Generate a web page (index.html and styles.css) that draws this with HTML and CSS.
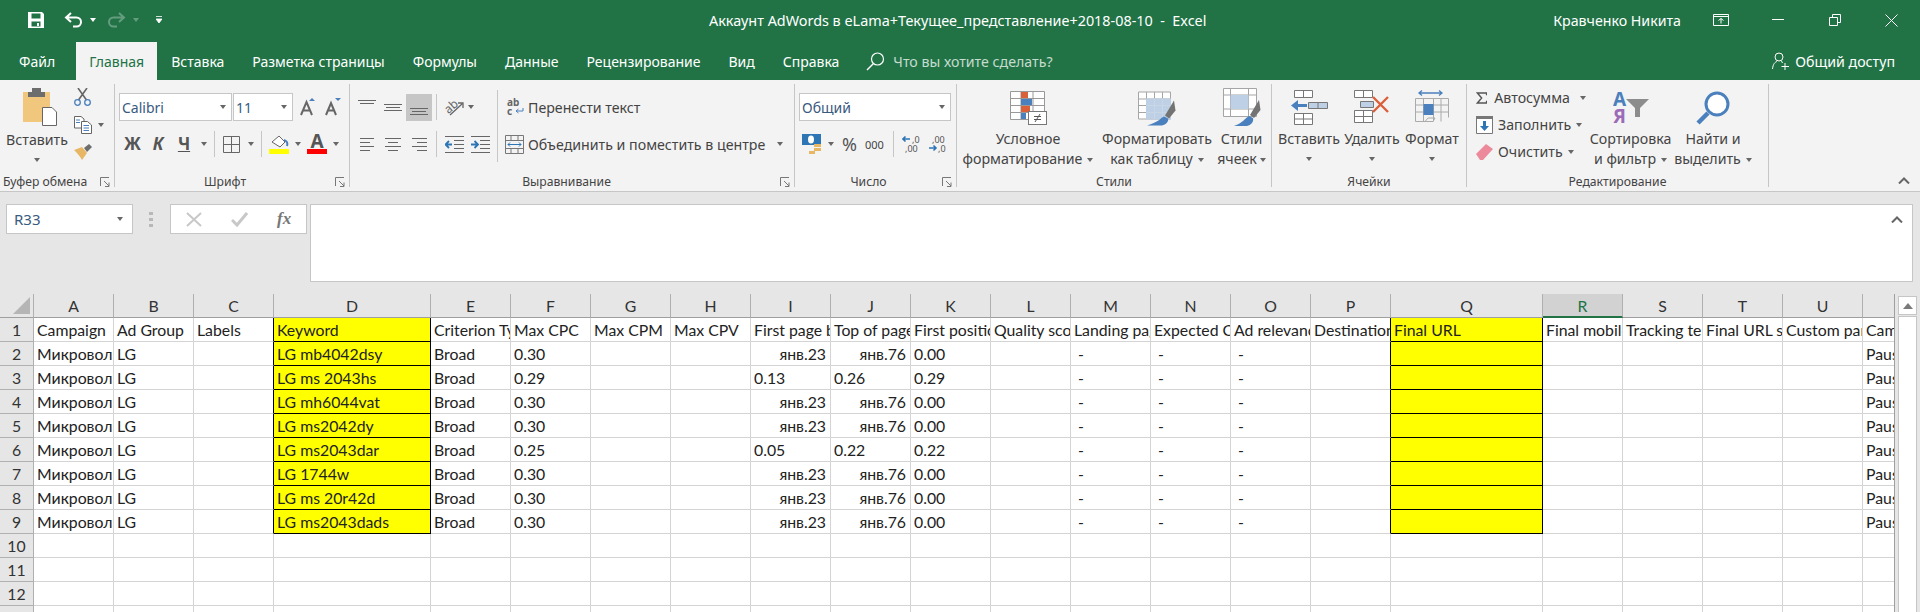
FILE: index.html
```html
<!DOCTYPE html>
<html lang="ru">
<head>
  <meta charset="UTF-8">
  <title>Аккаунт AdWords в eLama+Текущее_представление+2018-08-10 - Excel</title>
  <link rel="stylesheet" href="styles.css">
</head>
<body>
  <div class="title-bar">
    <svg class="qat-save" width="16" height="16" viewBox="0 0 16 16"><path fill="#fff" fill-rule="evenodd" d="M0 0H14L16 2V16H0ZM3.500 1.500V6.500H12.500V1.500ZM3.500 9.500V14.500H12.500V9.500Z"/><rect x="9" y="11" width="2" height="3" fill="#fff"/></svg>
    <svg class="qat-undo" width="19" height="16" viewBox="0 0 19 16"><path d="M7 1L2 5.500L7 10M2 5.500H12.500A4.500 4.500 0 0 1 12.500 14.500H9" fill="none" stroke="#fff" stroke-width="2"/></svg>
    <span class="caret white ml7"></span>
    <svg class="qat-redo" width="19" height="16" viewBox="0 0 19 16"><path d="M12 1L17 5.500L12 10M17 5.500H6.500A4.500 4.500 0 0 0 6.500 14.500H10" fill="none" stroke="#fff" stroke-width="2"/></svg>
    <span class="caret white faded ml7"></span>
    <svg class="qat-more" width="6" height="8" viewBox="0 0 6 8"><path d="M0 .5H6M0 3H6L3 7Z" fill="#fff" stroke="#fff" stroke-width=".8"/></svg>
    <div class="doc-title">Аккаунт AdWords в eLama+Текущее_представление+2018-08-10&nbsp; -&nbsp; Excel</div>
    <div class="user-name">Кравченко Никита</div>
    <svg class="win-display" width="16" height="12" viewBox="0 0 16 12"><path d="M.5 .5H15.500V11.500H.5ZM.5 2.500H15.500M8 9.500V4.500M5.500 6.500L8 4.500L10.500 6.500" fill="none" stroke="#fff"/></svg>
    <svg class="win-min" width="12" height="12" viewBox="0 0 12 12"><path d="M0 5.500H12" stroke="#fff"/></svg>
    <svg class="win-max" width="12" height="12" viewBox="0 0 12 12"><path d="M.5 3.500H8.500V11.500H.5ZM3.500 3.500V.5H11.500V8.500H8.500" fill="none" stroke="#fff"/></svg>
    <svg class="win-close" width="13" height="13" viewBox="0 0 13 13"><path d="M.5 .5L12.500 12.500M12.500 .5L.5 12.500" stroke="#fff"/></svg>
  </div>

  <div class="tab-bar">
    <div class="tab tab-file">Файл</div>
    <div class="tab active">Главная</div>
    <div class="tab">Вставка</div>
    <div class="tab">Разметка страницы</div>
    <div class="tab">Формулы</div>
    <div class="tab">Данные</div>
    <div class="tab">Рецензирование</div>
    <div class="tab">Вид</div>
    <div class="tab">Справка</div>
    <svg class="tell-icon" width="19" height="19" viewBox="0 0 19 19"><circle cx="11.500" cy="7" r="6" fill="none" stroke="#fff" stroke-width="1.200"/><path d="M7.500 11.500L1 18" stroke="#fff" stroke-width="1.400"/></svg>
    <div class="tell-me">Что вы хотите сделать?</div>
    <svg class="share-icon" width="17" height="18" viewBox="0 0 17 18"><circle cx="7" cy="5" r="4" fill="none" stroke="#fff"/><path d="M.5 17C1 12 3 10 5 9.500M9 9.500L11 10.500M13 11V18M9.500 14.500H17" fill="none" stroke="#fff"/></svg>
    <div class="share">Общий доступ</div>
  </div>

  <div class="ribbon">
    <!-- Буфер обмена -->
    <section class="group g-clip">
      <div class="group-body clip-body">
        <div class="big-btn paste-btn">
          <svg class="icon-box" width="34" height="38" viewBox="0 0 34 38"><rect y="4" width="27" height="30" fill="#f0c77d"/><path d="M5 9V4H9V0H18V4H22V9Z" fill="#6d6d6d"/><path d="M19.500 19.500H29L33.500 24V37.500H19.500Z" fill="#fff" stroke="#666"/></svg>
          <div class="line">Вставить</div>
          <span class="caret line-caret"></span>
        </div>
        <div class="clip-tools">
          <svg width="17" height="18" viewBox="0 0 17 18"><path d="M4.500 12L13 0M12.500 12L4 0" stroke="#666" stroke-width="1.600"/><circle cx="3.500" cy="14.500" r="2.800" fill="none" stroke="#4a80bd" stroke-width="1.300"/><circle cx="13.500" cy="14.500" r="2.800" fill="none" stroke="#4a80bd" stroke-width="1.300"/></svg>
          <div class="row-center">
            <svg width="18" height="18" viewBox="0 0 18 18"><path d="M.5 .5H7L10 3V12H.5Z" fill="#fff" stroke="#666"/><path d="M7.500 5.500H13.500L17.500 9V17.500H7.500Z" fill="#fff" stroke="#666"/><path d="M9.500 9.500H15M9.500 12H15M9.500 14.500H15M2 4H6M2 6.500H6" stroke="#4a80bd"/></svg>
            <span class="caret ml6"></span>
          </div>
          <svg width="18" height="16" viewBox="0 0 18 16"><path d="M0 6L8 3L13 9L8 16C6 12 3 9 0 6Z" fill="#e8b765"/><path d="M10 4L15 0L18 3L13 8Z" fill="#6d6d6d"/></svg>
        </div>
      </div>
      <div class="group-label"><span class="label-text label-clip">Буфер обмена</span><svg class="launcher" width="10" height="10" viewBox="0 0 10 10"><path d="M.5 9V.5H9M4 4L9 9M9 5.500V9.500H5" fill="none" stroke="#777"/></svg></div>
    </section>

    <!-- Шрифт -->
    <section class="group g-font">
      <div class="group-body">
        <div class="tool-row">
          <div class="select sel-font">Calibri<span class="caret"></span></div>
          <div class="select sel-size">11<span class="caret"></span></div>
          <svg class="ml7" width="16" height="18" viewBox="0 0 16 18"><path d="M1 17L6.500 4L12 17M3 12.500H10" fill="none" stroke="#666" stroke-width="2"/><path d="M9 3L12 0L15 3Z" fill="#4a80bd"/></svg>
          <svg class="ml9" width="16" height="18" viewBox="0 0 16 18"><path d="M1 17L6 5L11 17M3 12.500H9" fill="none" stroke="#666" stroke-width="2"/><path d="M10 0H16L13 3Z" fill="#4a80bd"/></svg>
        </div>
        <div class="tool-row row-two pl9">
          <b class="glyph glyph-b">Ж</b>
          <i class="glyph glyph-i">К</i>
          <span class="glyph glyph-u">Ч</span>
          <span class="caret ml9"></span>
          <span class="vsep ml7"></span>
          <svg class="ml8" width="17" height="17" viewBox="0 0 17 17"><path d="M.5 .5H16.500V16.500H.5ZM8.500 .5V16.500M.5 8.500H16.500" fill="none" stroke="#666"/></svg>
          <span class="caret ml8"></span>
          <span class="vsep ml7"></span>
          <svg class="ml7" width="20" height="20" viewBox="0 0 20 20"><path d="M3 8L10 2L16 8L11 13Z" fill="#fff" stroke="#666"/><path d="M15 6C18 7 19 9 18 12" fill="none" stroke="#4a80bd" stroke-width="2"/><rect y="15" width="20" height="5" fill="#ff0"/></svg>
          <span class="caret ml6"></span>
          <div class="font-color ml6"><span class="font-color-a">A</span><span class="font-color-bar"></span></div>
          <span class="caret ml6"></span>
        </div>
      </div>
      <div class="group-label"><span class="label-text">Шрифт</span><svg class="launcher" width="10" height="10" viewBox="0 0 10 10"><path d="M.5 9V.5H9M4 4L9 9M9 5.500V9.500H5" fill="none" stroke="#777"/></svg></div>
    </section>

    <!-- Выравнивание -->
    <section class="group g-align">
      <div class="group-body align-body">
        <div class="align-left">
          <div class="tool-row pl8">
            <svg width="18" height="20" viewBox="0 0 18 20"><path d="M0 3.500H18M2 6.500H16" stroke="#666"/></svg>
            <svg class="ml8" width="18" height="20" viewBox="0 0 18 20"><path d="M0 7.500H18M2 10.500H16M0 13.500H18" stroke="#666"/></svg>
            <div class="align-on ml4"><svg width="18" height="20" viewBox="0 0 18 20"><path d="M0 11.500H18M2 14.500H16M0 17.500H18" stroke="#666"/></svg></div>
            <span class="vsep ml4"></span>
            <svg class="ml8" width="19" height="19" viewBox="0 0 19 19"><text x="0" y="13" class="svg-ab" transform="rotate(-42 6 10)">ab</text><path d="M5 17L17 6M13 5H18V10" fill="none" stroke="#666" stroke-width="1.300"/></svg>
            <span class="caret ml4"></span>
          </div>
          <div class="tool-row row-two row-two-align pl10">
            <svg width="14" height="13" viewBox="0 0 14 13"><path d="M0 .5H14M0 4.500H10M0 8.500H14M0 12.500H10" stroke="#666"/></svg>
            <svg class="ml11" width="16" height="13" viewBox="0 0 16 13"><path d="M0 .5H16M3 4.500H13M0 8.500H16M3 12.500H13" stroke="#666"/></svg>
            <svg class="ml11" width="15" height="13" viewBox="0 0 15 13"><path d="M0 .5H15M5 4.500H15M0 8.500H15M5 12.500H15" stroke="#666"/></svg>
            <span class="vsep ml9"></span>
            <svg class="ml8" width="19" height="17" viewBox="0 0 19 17"><path d="M0 .5H19M9 4.500H19M9 8.500H19M9 12.500H19M0 16.500H19" stroke="#666"/><path d="M7 8.500H1M4 5L.5 8.500L4 12" fill="none" stroke="#2e75b6" stroke-width="1.800"/></svg>
            <svg class="ml7" width="19" height="17" viewBox="0 0 19 17"><path d="M0 .5H19M9 4.500H19M9 8.500H19M9 12.500H19M0 16.500H19" stroke="#666"/><path d="M0 8.500H6.500M3.500 5L7 8.500L3.500 12" fill="none" stroke="#2e75b6" stroke-width="1.800"/></svg>
          </div>
        </div>
        <span class="vsep tall"></span>
        <div class="align-right">
          <div class="tool-row wrap-row">
            <svg width="17" height="18" viewBox="0 0 17 18"><text x="0" y="8" class="svg-small">ab</text><text x="0" y="17" class="svg-small">c</text><path d="M16 10V13H9M11.500 11L9 13L11.500 15" fill="none" stroke="#4a80bd"/></svg>
            <span class="tool-text ml4">Перенести текст</span>
          </div>
          <div class="tool-row row-two merge-row">
            <svg width="19" height="19" viewBox="0 0 19 19"><path d="M.5 .5H18.500V18.500H.5ZM.5 5.500H18.500M.5 13.500H18.500M6 .5V5.500M13 .5V5.500M6 13.500V18.500M13 13.500V18.500" fill="none" stroke="#777"/><path d="M3 9.500H16M5 7.500L3 9.500L5 11.500M14 7.500L16 9.500L14 11.500" fill="none" stroke="#2e75b6"/></svg>
            <span class="tool-text ml4">Объединить и поместить в центре</span>
            <span class="caret ml12"></span>
          </div>
        </div>
      </div>
      <div class="group-label"><span class="label-text label-align">Выравнивание</span><svg class="launcher" width="10" height="10" viewBox="0 0 10 10"><path d="M.5 9V.5H9M4 4L9 9M9 5.500V9.500H5" fill="none" stroke="#777"/></svg></div>
    </section>

    <!-- Число -->
    <section class="group g-number">
      <div class="group-body">
        <div class="tool-row">
          <div class="select sel-format">Общий<span class="caret"></span></div>
        </div>
        <div class="tool-row row-two pl7">
          <svg width="20" height="20" viewBox="0 0 20 20"><rect width="19" height="11" fill="#2e75b6"/><ellipse cx="9" cy="5.500" rx="3" ry="4" fill="#fff"/><path d="M7 17H13V20H7ZM12 10H19V13H12ZM12 14H19V17H12Z" fill="#e8b765"/></svg>
          <span class="caret ml6"></span>
          <span class="percent ml8">%</span>
          <span class="thousands ml8">000</span>
          <span class="vsep ml9"></span>
          <svg class="ml8" width="20" height="18" viewBox="0 0 20 18"><text x="10" y="8" class="svg-digits">,0</text><text x="3" y="17" class="svg-digits">,00</text><path d="M8 4H1M3.500 1.500L1 4L3.500 6.500" fill="none" stroke="#2e75b6" stroke-width="1.600"/></svg>
          <svg class="ml6" width="20" height="18" viewBox="0 0 20 18"><text x="4" y="8" class="svg-digits">,00</text><text x="10" y="17" class="svg-digits">,0</text><path d="M1 13H8M5.500 10.500L8 13L5.500 15.500" fill="none" stroke="#2e75b6" stroke-width="1.600"/></svg>
        </div>
      </div>
      <div class="group-label"><span class="label-text">Число</span><svg class="launcher" width="10" height="10" viewBox="0 0 10 10"><path d="M.5 9V.5H9M4 4L9 9M9 5.500V9.500H5" fill="none" stroke="#777"/></svg></div>
    </section>

    <!-- Стили -->
    <section class="group g-styles">
      <div class="group-body big-row">
        <div class="big-btn b-cond">
          <svg class="icon-box" width="38" height="34" viewBox="0 0 38 34"><path d="M1.500 .5H35.500V28.500H1.500ZM1.500 7.500H35.500M1.500 14.500H35.500M1.500 21.500H35.500M12 .5V28.500M24 .5V28.500" fill="#fff" stroke="#999"/><rect x="12" y="1" width="7" height="6" fill="#d9603b"/><rect x="12" y="8" width="11" height="6" fill="#4a80bd"/><rect x="12" y="15" width="9" height="6" fill="#d9603b"/><rect x="12" y="22" width="5" height="6" fill="#4a80bd"/><rect x="19.500" y="20.500" width="18" height="13" fill="#fff" stroke="#777"/><path d="M25 25.500H32M25 28.500H32M31 23L26 31" stroke="#555" fill="none"/></svg>
          <div class="line">Условное</div>
          <div class="line">форматирование<span class="caret ml5"></span></div>
        </div>
        <div class="big-btn b-table">
          <svg class="icon-box" width="38" height="35" viewBox="0 0 38 35"><path d="M.5 1.500H32.500V28.500H.5ZM.5 8.500H32.500M.5 15H32.500M.5 22H32.500M8.500 1.500V28.500M16.500 1.500V28.500M24.500 1.500V28.500" fill="#fff" stroke="#a5a5a5"/><rect x="8" y="8" width="25" height="21" fill="#bdd0e6"/><path d="M8.500 15H32.500M8.500 22H32.500M16.500 8V28.500M24.500 8V28.500" stroke="#c9d6e6"/><path d="M36 10L37.500 20L31 28L27 25Z" fill="#737373"/><path d="M26 26C22 28 20 32 9 35H24C28 34 31 31 30 28Z" fill="#4a80bd"/></svg>
          <div class="line">Форматировать</div>
          <div class="line">как таблицу<span class="caret ml5"></span></div>
        </div>
        <div class="big-btn b-cellstyle">
          <svg class="icon-box icon-high" width="38" height="38" viewBox="0 0 38 38"><path d="M.5 .5H33.500V28.500H.5ZM.5 7H33.500M.5 21H33.500M7.500 .5V28.500M25.500 .5V28.500" fill="#fff" stroke="#a5a5a5"/><rect x="7.500" y="7" width="18" height="14" fill="#bdd0e6"/><path d="M36 12L37.500 22L31 30L27 27Z" fill="#737373"/><path d="M26 28C22 30 20 35 11 38H24C28 37 31 34 30 30Z" fill="#4a80bd"/></svg>
          <div class="line">Стили</div>
          <div class="line">ячеек<span class="caret ml3"></span></div>
        </div>
      </div>
      <div class="group-label"><span class="label-text">Стили</span></div>
    </section>

    <!-- Ячейки -->
    <section class="group g-cells">
      <div class="group-body big-row">
        <div class="big-btn b-insert">
          <svg class="icon-box" width="37" height="36" viewBox="0 0 37 36"><path d="M3.500 .5H21.500V7.500H3.500ZM12.500 .5V7.500M3.500 23.500H21.500V34.500H3.500ZM3.500 29H21.500M12.500 23.500V34.500" fill="#fff" stroke="#777"/><path d="M17.500 12.500H36.500V18.500H17.500ZM27 12.500V18.500" fill="#bdd0e6" stroke="#777"/><path d="M16 15.500H3" stroke="#4a80bd" stroke-width="3"/><path d="M7 10L0 15.500L7 21Z" fill="#4a80bd"/></svg>
          <div class="line">Вставить</div>
          <span class="caret line-caret"></span>
        </div>
        <div class="big-btn b-delete">
          <svg class="icon-box" width="36" height="36" viewBox="0 0 36 36"><path d="M.5 .5H18.500V7.500H.5ZM9.500 .5V7.500M.5 20.500H18.500V32.500H.5ZM.5 26.500H18.500M9.500 20.500V32.500" fill="#fff" stroke="#777"/><path d="M6.500 11.500H19.500V17.500H6.500Z" fill="#bdd0e6" stroke="#777"/><path d="M19 7L34 22M34 7L19 22" stroke="#d9603b" stroke-width="2.400"/></svg>
          <div class="line">Удалить</div>
          <span class="caret line-caret"></span>
        </div>
        <div class="big-btn b-format">
          <svg class="icon-box" width="35" height="36" viewBox="0 0 35 36"><path d="M4 3H27M7 .5L4 3L7 5.500M24 .5L27 3L24 5.500" fill="none" stroke="#4a80bd" stroke-width="1.300"/><path d="M.5 8.500H33.500V27.500M.5 8.500V31.500M.5 15H33.500M.5 22H33.500M8.500 8.500V31.500M18.500 8.500V31.500M26 8.500V31.500M.5 31.500H10L13 28H20L18 31.500H10" fill="none" stroke="#aaa"/><rect x="8.500" y="14" width="10" height="11" fill="#4a80bd"/></svg>
          <div class="line">Формат</div>
          <span class="caret line-caret"></span>
        </div>
      </div>
      <div class="group-label"><span class="label-text">Ячейки</span></div>
    </section>

    <!-- Редактирование -->
    <section class="group g-edit">
      <div class="group-body big-row edit-body">
        <div class="edit-col">
          <div class="edit-row">
            <svg width="16" height="16" viewBox="0 0 16 16"><path d="M15 4V1H2L8 8L2 15H15V12" fill="none" stroke="#555" stroke-width="2"/></svg>
            <span class="tool-text ml7">Автосумма</span><span class="caret ml10"></span>
          </div>
          <div class="edit-row">
            <svg width="17" height="18" viewBox="0 0 17 18"><path d="M.5 .5H16.500V17.500H.5Z" fill="#fff" stroke="#777"/><rect width="17" height="3" fill="#777"/><path d="M8.500 5V12" stroke="#2e75b6" stroke-width="3"/><path d="M4 10H13L8.500 15Z" fill="#2e75b6"/></svg>
            <span class="tool-text ml5">Заполнить</span><span class="caret ml5"></span>
          </div>
          <div class="edit-row">
            <svg width="17" height="16" viewBox="0 0 17 16"><path d="M0 10L10 0L17 5L7 16H4Z" fill="#ec8a9c"/></svg>
            <span class="tool-text ml5">Очистить</span><span class="caret ml5"></span>
          </div>
        </div>
        <div class="big-btn b-sort">
          <svg class="icon-box" width="36" height="32" viewBox="0 0 36 32"><text x="0" y="14" class="svg-sort-a">A</text><text x="0" y="31" class="svg-sort-b">Я</text><path d="M13 7H36L27 16V25H22V16Z" fill="#8c8c8c"/></svg>
          <div class="line">Сортировка</div>
          <div class="line">и фильтр<span class="caret ml5"></span></div>
        </div>
        <div class="big-btn b-find">
          <svg class="icon-box" width="34" height="34" viewBox="0 0 34 34"><circle cx="21" cy="13" r="11" fill="#fff" stroke="#4a80bd" stroke-width="3"/><path d="M12 22L2 32" stroke="#4a80bd" stroke-width="4.500"/></svg>
          <div class="line">Найти и</div>
          <div class="line">выделить<span class="caret ml5"></span></div>
        </div>
      </div>
      <div class="group-label"><span class="label-text">Редактирование</span></div>
    </section>

    <div class="ribbon-rest">
      <svg width="12" height="7" viewBox="0 0 12 7"><path d="M1 6.500L6 1.500L11 6.500" fill="none" stroke="#666" stroke-width="2"/></svg>
    </div>
  </div>

  <div class="formula-bar">
    <div class="name-box">R33<span class="caret"></span></div>
    <div class="grip"><i></i><i></i><i></i></div>
    <div class="fx-box">
      <svg width="16" height="15" viewBox="0 0 16 15"><path d="M1 1L15 14M15 1L1 14" stroke="#c8c8c8" stroke-width="2"/></svg>
      <svg width="17" height="15" viewBox="0 0 17 15"><path d="M1 8L6 13L16 1" fill="none" stroke="#c8c8c8" stroke-width="3"/></svg>
      <span class="fx">fx</span>
    </div>
    <div class="formula-input">
      <svg width="12" height="7" viewBox="0 0 12 7"><path d="M1 6.500L6 1.500L11 6.500" fill="none" stroke="#666" stroke-width="2"/></svg>
    </div>
  </div>

  <div class="sheet">
    <div class="grid-wrap">
      <table class="grid">
        <colgroup>
          <col class="c-head"><col class="c80"><col class="c80"><col class="c80"><col class="c-d">
          <col class="c80"><col class="c80"><col class="c80"><col class="c80"><col class="c80"><col class="c80"><col class="c80"><col class="c80"><col class="c80"><col class="c80"><col class="c80"><col class="c80">
          <col class="c-q"><col class="c80"><col class="c80"><col class="c80"><col class="c80"><col class="c80">
        </colgroup>
        <thead>
          <tr>
            <th class="corner"><svg width="17" height="17" viewBox="0 0 17 17"><path d="M17 0V17H0Z" fill="#b5b5b5"/></svg></th>
            <th>A</th><th>B</th><th>C</th><th>D</th><th>E</th><th>F</th><th>G</th><th>H</th><th>I</th><th>J</th><th>K</th><th>L</th><th>M</th><th>N</th><th>O</th><th>P</th><th>Q</th><th class="sel">R</th><th>S</th><th>T</th><th>U</th><th></th>
          </tr>
        </thead>
        <tbody>
          <tr><th>1</th><td>Campaign</td><td>Ad Group</td><td class="bk">Labels</td><td class="y">Keyword</td><td>Criterion Type</td><td>Max CPC</td><td>Max CPM</td><td>Max CPV</td><td>First page bid</td><td>Top of page bid</td><td>First position bid</td><td>Quality score</td><td>Landing page experience</td><td>Expected CTR</td><td>Ad relevance</td><td class="bk">Destination URL</td><td class="y">Final URL</td><td>Final mobile URL</td><td>Tracking template</td><td>Final URL suffix</td><td>Custom parameter</td><td>Campaign Status</td></tr>
          <tr><th>2</th><td>Микроволновки</td><td>LG</td><td class="bk"></td><td class="y">LG mb4042dsy</td><td>Broad</td><td>0.30</td><td></td><td></td><td class="r">янв.23</td><td class="r">янв.76</td><td>0.00</td><td></td><td class="d">-</td><td class="d">-</td><td class="d">-</td><td class="bk"></td><td class="y"></td><td></td><td></td><td></td><td></td><td>Paused</td></tr>
          <tr><th>3</th><td>Микроволновки</td><td>LG</td><td class="bk"></td><td class="y">LG ms 2043hs</td><td>Broad</td><td>0.29</td><td></td><td></td><td>0.13</td><td>0.26</td><td>0.29</td><td></td><td class="d">-</td><td class="d">-</td><td class="d">-</td><td class="bk"></td><td class="y"></td><td></td><td></td><td></td><td></td><td>Paused</td></tr>
          <tr><th>4</th><td>Микроволновки</td><td>LG</td><td class="bk"></td><td class="y">LG mh6044vat</td><td>Broad</td><td>0.30</td><td></td><td></td><td class="r">янв.23</td><td class="r">янв.76</td><td>0.00</td><td></td><td class="d">-</td><td class="d">-</td><td class="d">-</td><td class="bk"></td><td class="y"></td><td></td><td></td><td></td><td></td><td>Paused</td></tr>
          <tr><th>5</th><td>Микроволновки</td><td>LG</td><td class="bk"></td><td class="y">LG ms2042dy</td><td>Broad</td><td>0.30</td><td></td><td></td><td class="r">янв.23</td><td class="r">янв.76</td><td>0.00</td><td></td><td class="d">-</td><td class="d">-</td><td class="d">-</td><td class="bk"></td><td class="y"></td><td></td><td></td><td></td><td></td><td>Paused</td></tr>
          <tr><th>6</th><td>Микроволновки</td><td>LG</td><td class="bk"></td><td class="y">LG ms2043dar</td><td>Broad</td><td>0.25</td><td></td><td></td><td>0.05</td><td>0.22</td><td>0.22</td><td></td><td class="d">-</td><td class="d">-</td><td class="d">-</td><td class="bk"></td><td class="y"></td><td></td><td></td><td></td><td></td><td>Paused</td></tr>
          <tr><th>7</th><td>Микроволновки</td><td>LG</td><td class="bk"></td><td class="y">LG 1744w</td><td>Broad</td><td>0.30</td><td></td><td></td><td class="r">янв.23</td><td class="r">янв.76</td><td>0.00</td><td></td><td class="d">-</td><td class="d">-</td><td class="d">-</td><td class="bk"></td><td class="y"></td><td></td><td></td><td></td><td></td><td>Paused</td></tr>
          <tr><th>8</th><td>Микроволновки</td><td>LG</td><td class="bk"></td><td class="y">LG ms 20r42d</td><td>Broad</td><td>0.30</td><td></td><td></td><td class="r">янв.23</td><td class="r">янв.76</td><td>0.00</td><td></td><td class="d">-</td><td class="d">-</td><td class="d">-</td><td class="bk"></td><td class="y"></td><td></td><td></td><td></td><td></td><td>Paused</td></tr>
          <tr><th>9</th><td>Микроволновки</td><td>LG</td><td class="bk"></td><td class="y">LG ms2043dads</td><td>Broad</td><td>0.30</td><td></td><td></td><td class="r">янв.23</td><td class="r">янв.76</td><td>0.00</td><td></td><td class="d">-</td><td class="d">-</td><td class="d">-</td><td class="bk"></td><td class="y"></td><td></td><td></td><td></td><td></td><td>Paused</td></tr>
          <tr><th>10</th><td></td><td></td><td></td><td></td><td></td><td></td><td></td><td></td><td></td><td></td><td></td><td></td><td></td><td></td><td></td><td></td><td></td><td></td><td></td><td></td><td></td><td></td></tr>
          <tr><th>11</th><td></td><td></td><td></td><td></td><td></td><td></td><td></td><td></td><td></td><td></td><td></td><td></td><td></td><td></td><td></td><td></td><td></td><td></td><td></td><td></td><td></td><td></td></tr>
          <tr><th>12</th><td></td><td></td><td></td><td></td><td></td><td></td><td></td><td></td><td></td><td></td><td></td><td></td><td></td><td></td><td></td><td></td><td></td><td></td><td></td><td></td><td></td><td></td></tr>
          <tr><th></th><td></td><td></td><td></td><td></td><td></td><td></td><td></td><td></td><td></td><td></td><td></td><td></td><td></td><td></td><td></td><td></td><td></td><td></td><td></td><td></td><td></td><td></td></tr>
        </tbody>
      </table>
    </div>
    <div class="scrollbar">
      <div class="scroll-btn"><svg width="10" height="6" viewBox="0 0 10 6"><path d="M5 0L10 6H0Z" fill="#7a7a7a"/></svg></div>
      <div class="scroll-track"></div>
    </div>
  </div>
</body>
</html>
```

FILE: styles.css
```css
html, body {
  height: 100%;
}
body {
  margin: 0;
  overflow: hidden;
  background: #e6e6e6;
  font-family: "Noto Sans", "Open Sans", sans-serif;
  font-size: 14.200px;
  color: #444;
}

/* spacing helpers */
.ml3 { margin-left: 3px; }
.ml4 { margin-left: 4px; }
.ml5 { margin-left: 5px; }
.ml6 { margin-left: 6px; }
.ml7 { margin-left: 7px; }
.ml8 { margin-left: 8px; }
.ml9 { margin-left: 9px; }
.ml10 { margin-left: 10px; }
.ml11 { margin-left: 11px; }
.ml12 { margin-left: 12px; }
.pl7 { padding-left: 7px; }
.pl8 { padding-left: 8px; }
.pl9 { padding-left: 9px; }
.pl10 { padding-left: 10px; }

.caret {
  display: inline-block;
  flex: none;
  width: 0;
  height: 0;
  border-left: 3.5px solid transparent;
  border-right: 3.5px solid transparent;
  border-top: 4px solid #666;
  vertical-align: middle;
}
.caret.white {
  border-top-color: #fff;
}
.caret.faded {
  opacity: .3;
}

/* title bar */
.title-bar {
  display: flex;
  align-items: center;
  height: 42px;
  padding: 0 0 2px 28px;
  background: #217346;
  color: #fff;
  box-sizing: border-box;
}
.qat-undo { margin-left: 20px; }
.qat-redo { margin-left: 11px; opacity: .3; }
.qat-more { margin-left: 17px; }
.doc-title {
  margin-left: 547px;
  width: 500px;
  white-space: nowrap;
  font-size: 14.400px;
}
.user-name {
  margin-left: auto;
}
.win-display { margin-left: 32px; }
.win-min { margin-left: 43px; }
.win-max { margin-left: 45px; }
.win-close { margin-left: 44px; margin-right: 22px; }

/* tabs */
.tab-bar {
  display: flex;
  align-items: stretch;
  height: 38px;
  background: #217346;
  color: #fff;
  font-size: 14px;
}
.tab {
  display: flex;
  align-items: center;
  padding: 0 14px;
  white-space: nowrap;
}
.tab-file {
  padding: 0 21px 0 19px;
}
.tab.active {
  padding: 0 13px;
  background: #f3f3f3;
  color: #217346;
}
.tell-icon {
  align-self: center;
  margin-left: 13px;
}
.tell-me {
  display: flex;
  align-items: center;
  margin-left: 8px;
  font-size: 14.200px;
  color: #c5dccf;
}
.share-icon {
  align-self: center;
  margin-left: auto;
}
.share {
  display: flex;
  align-items: center;
  margin-left: 6px;
  margin-right: 25px;
  font-size: 14.200px;
}

/* ribbon */
.ribbon {
  display: flex;
  height: 112px;
  padding: 4px 0;
  background: #f3f3f3;
  border-bottom: 1px solid #c6c6c6;
  box-sizing: border-box;
}
.group {
  display: flex;
  flex: none;
  flex-direction: column;
  border-right: 1px solid #c6c6c6;
  box-sizing: border-box;
}
.g-clip { width: 115px; }
.g-font { width: 235px; }
.g-align { width: 445px; }
.g-number { width: 162px; }
.g-styles { width: 315px; }
.g-cells { width: 195px; }
.g-edit { width: 302px; }
.group-body {
  flex: 1;
  padding-top: 9px;
  min-height: 0;
}
.group-label {
  display: flex;
  flex: none;
  align-items: center;
  height: 16px;
  padding-top: 5px;
  box-sizing: border-box;
  font-size: 12.200px;
  white-space: nowrap;
}
.label-text {
  flex: 1;
  text-align: center;
}
.label-clip {
  flex: none;
  margin-left: 3px;
  margin-right: auto;
}
.label-align {
  padding-left: 3px;
}
.launcher {
  flex: none;
  margin-right: 4px;
}
.ribbon-rest {
  display: flex;
  flex: 1;
  align-items: flex-end;
  justify-content: flex-end;
  padding: 0 10px 3px 0;
}

.tool-row {
  display: flex;
  align-items: center;
  height: 28px;
}
.row-two {
  height: 20px;
  margin-top: 13px;
}
.row-center {
  display: flex;
  align-items: center;
}
.tool-text {
  white-space: nowrap;
}
.vsep {
  display: block;
  flex: none;
  width: 1px;
  height: 26px;
  background: #c6c6c6;
}
.vsep.tall {
  height: 72px;
  margin-top: -3px;
}

.select {
  display: flex;
  flex: none;
  align-items: center;
  justify-content: space-between;
  height: 28px;
  padding: 0 5px 0 2px;
  border: 1px solid #c6c6c6;
  background: #fff;
  box-sizing: border-box;
  font-size: 14px;
  color: #3a5a80;
}
.sel-font { width: 113px; margin-left: 4px; }
.sel-size { width: 60px; margin-left: 1px; }
.sel-format { width: 152px; margin-left: 4px; }

.glyph {
  display: block;
  flex: none;
  width: 16px;
  font-size: 17px;
  line-height: 20px;
  text-align: center;
  color: #555;
}
.glyph-b { font-weight: 700; }
.glyph-i { margin-left: 10px; font-weight: 700; }
.glyph-u {
  margin-left: 10px;
  font-weight: 700;
  text-decoration: underline;
}
.font-color {
  display: flex;
  flex: none;
  flex-direction: column;
  align-items: center;
  width: 20px;
}
.font-color-a {
  font-size: 19px;
  font-weight: 700;
  line-height: 15px;
  color: #555;
}
.font-color-bar {
  width: 20px;
  height: 5px;
  background: #f00;
}

.align-body {
  display: flex;
}
.align-left {
  width: 147px;
}
.align-on {
  display: flex;
  flex: none;
  align-items: center;
  justify-content: center;
  width: 26px;
  height: 27px;
  background: #c6c6c6;
}
.row-two-align {
  margin-top: 13px;
}
.wrap-row {
  padding-left: 9px;
}
.merge-row {
  padding-left: 7px;
}
.svg-ab {
  font-size: 12px;
  fill: #666;
}
.svg-small {
  font-size: 10px;
  font-weight: 700;
  fill: #666;
}
.svg-digits {
  font-size: 9px;
  fill: #555;
}

.percent {
  font-size: 18px;
  color: #555;
}
.thousands {
  font-size: 11px;
}

/* big ribbon buttons */
.big-row {
  display: flex;
  padding-top: 0;
}
.big-btn {
  display: flex;
  flex: none;
  flex-direction: column;
  align-items: center;
  white-space: nowrap;
}
.icon-box {
  flex: none;
  height: 36px;
  margin-top: 6px;
  margin-bottom: 3px;
}
.icon-high {
  margin-top: 4px;
  height: 38px;
}
.line {
  height: 20px;
  line-height: 20px;
}
.line-caret {
  margin-top: 8px;
}
.clip-body {
  display: flex;
  padding-top: 0;
}
.paste-btn {
  width: 74px;
}
.paste-btn .icon-box {
  height: 38px;
  margin-top: 4px;
  margin-left: 6px;
  margin-bottom: 4px;
}
.clip-tools {
  display: flex;
  flex-direction: column;
  gap: 10px;
  padding-top: 4px;
}
.b-cond { width: 140px; margin-left: 1px; }
.b-table { width: 118px; }
.b-cellstyle { width: 51px; }
.b-insert { width: 62px; margin-left: 6px; }
.b-delete { width: 64px; }
.b-format { width: 56px; }
.b-sort { width: 89px; }
.b-find { width: 76px; }
.edit-col {
  width: 119px;
  padding-left: 9px;
  box-sizing: border-box;
}
.edit-row {
  display: flex;
  align-items: center;
  height: 27px;
  white-space: nowrap;
}
.svg-sort-a {
  font-size: 19px;
  font-weight: 700;
  fill: #4a80bd;
}
.svg-sort-b {
  font-size: 19px;
  font-weight: 700;
  fill: #9b6bb8;
}

/* formula bar */
.formula-bar {
  display: flex;
  align-items: flex-start;
  height: 102px;
  padding: 12px 7px 0 6px;
  box-sizing: border-box;
}
.name-box {
  display: flex;
  flex: none;
  align-items: center;
  justify-content: space-between;
  width: 127px;
  height: 30px;
  padding: 0 9px 0 7px;
  border: 1px solid #c6c6c6;
  background: #fff;
  box-sizing: border-box;
  font-size: 15px;
  color: #3a5a80;
}
.grip {
  display: flex;
  flex: none;
  flex-direction: column;
  gap: 3px;
  width: 4px;
  margin: 8px 17px 0 16px;
}
.grip i {
  display: block;
  width: 4px;
  height: 3px;
  background: #b8b8b8;
}
.fx-box {
  display: flex;
  flex: none;
  align-items: center;
  gap: 29px;
  width: 137px;
  height: 30px;
  padding-left: 15px;
  border: 1px solid #c6c6c6;
  background: #fff;
  box-sizing: border-box;
}
.fx {
  font-family: "Liberation Serif", serif;
  font-size: 17px;
  font-style: italic;
  font-weight: 700;
  color: #777;
}
.formula-input {
  display: flex;
  flex: 1;
  justify-content: flex-end;
  height: 78px;
  margin-left: 3px;
  padding: 11px 9px 0 0;
  border: 1px solid #c6c6c6;
  background: #fff;
  box-sizing: border-box;
}

/* sheet */
.sheet {
  display: flex;
  height: 318px;
  overflow: hidden;
}
.grid-wrap {
  flex: none;
  width: 1895px;
  border-right: 1px solid #9f9f9f;
  box-sizing: border-box;
  overflow: hidden;
}
.grid {
  width: 1942px;
  table-layout: fixed;
  border-collapse: separate;
  border-spacing: 0;
  font-family: "Lato", "Open Sans", sans-serif;
  font-size: 15.800px;
  color: #222;
}
.c-head { width: 34px; }
.c80 { width: 80px; }
.c-d { width: 157px; }
.c-q { width: 152px; }
.grid th {
  height: 24px;
  padding: 0;
  border-right: 1px solid #b0b0b0;
  border-bottom: 1px solid #b0b0b0;
  background: #e6e6e6;
  box-sizing: border-box;
  font-weight: 400;
  text-align: center;
  color: #333;
}
.grid thead th {
  border-bottom-color: #9f9f9f;
}
.grid th.sel {
  background: #d2d2d2;
  border-bottom: 2px solid #217346;
  color: #217346;
}
.grid th.corner {
  text-align: right;
  padding-right: 3px;
  line-height: 0;
}
.grid td {
  height: 24px;
  padding: 0 0 0 3px;
  border-right: 1px solid #d4d4d4;
  border-bottom: 1px solid #d4d4d4;
  background: #fff;
  box-sizing: border-box;
  white-space: nowrap;
  overflow: hidden;
}
.grid td.r {
  padding: 0 4px 0 0;
  text-align: right;
}
.grid td.d {
  padding-left: 7px;
}
.grid td.bk {
  border-right-color: #000;
}
.grid td.y {
  background: #ff0;
  border-right-color: #000;
  border-bottom-color: #000;
}

.scrollbar {
  flex: none;
  width: 19px;
  margin: 2px 0 0 3px;
}
.scroll-btn {
  display: flex;
  align-items: center;
  justify-content: center;
  height: 19px;
  border: 1px solid #c6c6c6;
  background: #fff;
  box-sizing: border-box;
}
.scroll-track {
  height: 300px;
  margin-top: 1px;
  border: 1px solid #c6c6c6;
  background: #fff;
}
```
